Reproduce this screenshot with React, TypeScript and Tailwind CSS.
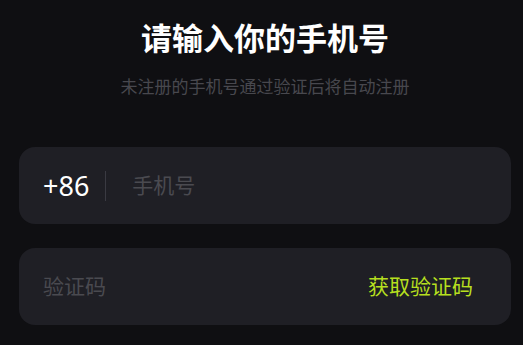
export default function App() {
  return (
    <div
      className="min-h-[345px] w-[523px] overflow-hidden bg-[#0f0f12]"
      style={{ fontFamily: '"Noto Sans", "Noto Sans CJK SC", sans-serif' }}
    >
      <div className="ml-[19px] w-[492px] pt-[18px]">
        <h1 className="text-center text-[31px] font-bold leading-[40px] text-white">请输入你的手机号</h1>
        <p className="mt-[18px] text-center text-[17px] leading-[22px] text-[#48484e]">
          未注册的手机号通过验证后将自动注册
        </p>

        <div className="mt-[49px] flex h-[77px] items-center rounded-[16px] bg-[#1f1f25] pl-[24px] pr-[24px]">
          <span className="text-[27px] leading-none text-white">+86</span>
          <span className="ml-[16px] h-[30px] w-px bg-[#3a3a42]" />
          <input
            className="ml-[26px] flex-1 bg-transparent text-[21px] text-white outline-none placeholder:text-[#4a4a50]"
            placeholder="手机号"
          />
        </div>

        <div className="mt-[24px] flex h-[77px] items-center rounded-[16px] bg-[#1f1f25] pl-[24px] pr-[38px]">
          <input
            className="flex-1 bg-transparent text-[21px] text-white outline-none placeholder:text-[#4a4a50]"
            placeholder="验证码"
          />
          <button className="text-[21px] text-[#b6df1f]">获取验证码</button>
        </div>
      </div>
    </div>
  );
}
